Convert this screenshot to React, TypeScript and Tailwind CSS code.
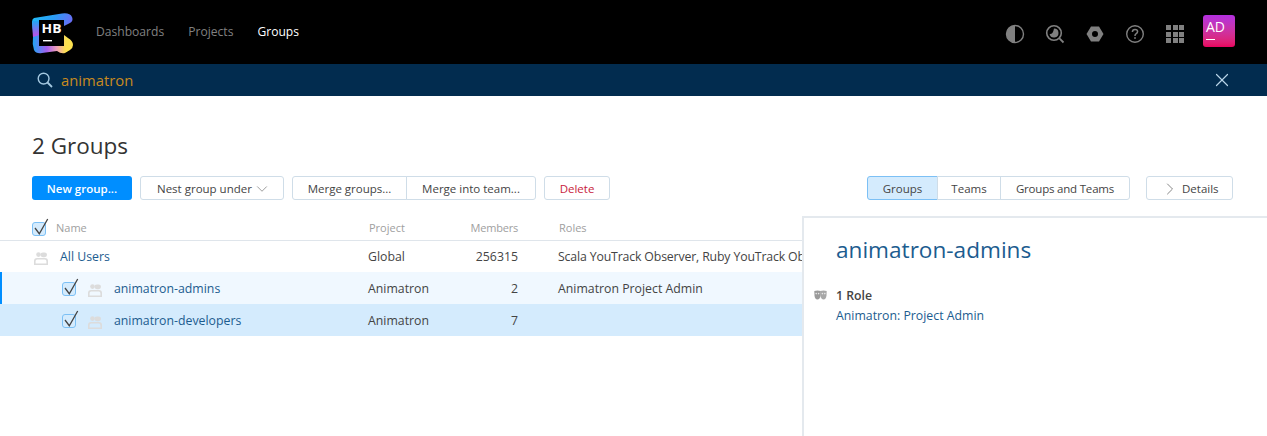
import { ChevronDown, ChevronRight, X } from "lucide-react";

const font = "font-['Open_Sans','Noto_Sans',sans-serif]";

const Logo = () => (
  <svg width="42" height="41" viewBox="0 0 42 41" className="shrink-0 mt-[3px]">
    <defs>
      <linearGradient id="logoTop" x1="0" y1="0" x2="1" y2="0.3">
        <stop offset="0" stopColor="#1fc0f7" />
        <stop offset="0.55" stopColor="#2b9bf5" />
        <stop offset="1" stopColor="#6a6cf5" />
      </linearGradient>
      <linearGradient id="logoLeft" x1="0" y1="0" x2="0" y2="1">
        <stop offset="0" stopColor="#1fa8f5" />
        <stop offset="1" stopColor="#c94be8" />
      </linearGradient>
      <linearGradient id="logoBottom" x1="0" y1="0.5" x2="1" y2="0.5">
        <stop offset="0" stopColor="#1fa5f5" />
        <stop offset="0.35" stopColor="#a45fee" />
        <stop offset="0.6" stopColor="#f0a0b8" />
        <stop offset="0.82" stopColor="#fbe04f" />
        <stop offset="1" stopColor="#fbe04f" />
      </linearGradient>
    </defs>
    <path d="M2 5 L30 0.5 Q38 -0.5 40 4 Q42 9 36 11 L32 13 L8 20 L2 23 Q0 14 0 9 Q0 6 2 5 Z" fill="url(#logoTop)" />
    <path d="M0.5 8 L8 8 L8 24 L1 24 Q0 14 0.5 8 Z" fill="url(#logoLeft)" />
    <path d="M1 24 L7 22 L7 33 L32 33 L32 22 L36 25 Q41 28 41 32 Q41 35 38 37 L33 40 Q29 41 25 38 L10 40 Q4 41 2 37 Q0 31 1 24 Z" fill="url(#logoBottom)" />
    <rect x="7" y="7" width="25" height="26" fill="#000" />
    <text x="9.5" y="20" fill="#fff" fontSize="13" fontWeight="700" fontFamily="'Open Sans', sans-serif" textLength="20" lengthAdjust="spacingAndGlyphs">
      HB
    </text>
    <rect x="11" y="27" width="9" height="1.4" fill="#fff" />
  </svg>
);

const ContrastIcon = () => (
  <svg width="20" height="20" viewBox="0 0 20 20">
    <circle cx="10" cy="10" r="8.5" fill="none" stroke="#808080" strokeWidth="1.4" />
    <path d="M10 1.5 A8.5 8.5 0 0 0 10 18.5 Z" fill="#808080" />
  </svg>
);

const ScanIcon = () => (
  <svg width="20" height="20" viewBox="0 0 20 20">
    <circle cx="9" cy="9" r="7.3" fill="none" stroke="#808080" strokeWidth="1.6" />
    <path d="M9 4.5 A4.5 4.5 0 1 1 4.6 10 Q8 10.5 9 4.5 Z" fill="#808080" />
    <path d="M14.2 14.2 L18.5 18.5" stroke="#808080" strokeWidth="1.8" />
  </svg>
);

const NutIcon = () => (
  <svg width="20" height="20" viewBox="0 0 20 20">
    <path fillRule="evenodd" d="M6 2.5 H14 L18.5 10 L14 17.5 H6 L1.5 10 Z M10 7 A3 3 0 1 0 10 13 A3 3 0 1 0 10 7 Z" fill="#808080" />
  </svg>
);

const HelpIcon = () => (
  <svg width="20" height="20" viewBox="0 0 20 20">
    <circle cx="10" cy="10" r="8.3" fill="none" stroke="#808080" strokeWidth="1.4" />
    <path d="M7.4 8 Q7.4 5.4 10 5.4 Q12.6 5.4 12.6 7.6 Q12.6 9 11 9.8 Q10 10.4 10 12" fill="none" stroke="#808080" strokeWidth="1.5" />
    <rect x="9.2" y="13.2" width="1.6" height="1.6" fill="#808080" />
  </svg>
);

const AppsIcon = () => (
  <div className="grid grid-cols-3 gap-[1.5px] ml-[1px]">
    {Array.from({ length: 9 }).map((_, i) => (
      <span key={i} className="w-[5px] h-[5px] bg-[#808080]" />
    ))}
  </div>
);

const UserIcon = () => (
  <svg width="14" height="13" viewBox="0 0 14 13" className="shrink-0">
    <circle cx="4.5" cy="2.6" r="2.3" fill="#dcdcdc" />
    <rect x="6.5" y="0.4" width="6.5" height="4.8" rx="2.4" fill="#dcdcdc" />
    <path fillRule="evenodd" d="M0 13 V9 Q0 6 3 6 H11 Q14 6 14 9 V13 Z M1.6 11.6 H12.4 V9.2 Q12.4 7.6 10.8 7.6 H3.2 Q1.6 7.6 1.6 9.2 Z" fill="#dcdcdc" />
  </svg>
);

const MasksIcon = () => (
  <svg width="13" height="10" viewBox="0 0 13 10" className="shrink-0">
    <path d="M0.3 1 Q3.5 -0.2 6.8 1 L6.6 5.5 Q6 9.5 3.4 9.5 Q0.9 9.5 0.5 5.5 Z" fill="#9a9a9a" />
    <path d="M6.2 1 Q9.5 -0.2 12.7 1 L12.5 5.5 Q12 9.5 9.6 9.5 Q7 9.5 6.4 5.5 Z" fill="#a8a8a8" />
    <circle cx="2.2" cy="3.6" r="0.8" fill="#e8e8e8" />
    <circle cx="4.6" cy="3.6" r="0.8" fill="#e8e8e8" />
    <circle cx="8.4" cy="3.6" r="0.8" fill="#e8e8e8" />
    <circle cx="10.8" cy="3.6" r="0.8" fill="#e8e8e8" />
  </svg>
);

const Check = () => (
  <span className="relative block w-[14px] h-[14px] rounded-[3px] border border-[#7cc0f5] bg-[#d4ebfd] shrink-0">
    <svg width="18" height="20" viewBox="0 0 18 20" className="absolute -top-[6px] -left-[1px]">
      <path d="M3 11 L7.3 16.7 L15.7 2" fill="none" stroke="#444" strokeWidth="1.3" />
    </svg>
  </span>
);

const btn = "h-[24px] flex items-center justify-center border border-[#cfdde8] text-[11.5px] text-[#444] pt-px";

const rows = [
  { name: "All Users", project: "Global", members: "256315", roles: "Scala YouTrack Observer, Ruby YouTrack Observer", bg: "bg-white h-[31px]", nested: false, accent: false, rolesClass: "tracking-[-0.15px]" },
  { name: "animatron-admins", project: "Animatron", members: "2", roles: "Animatron Project Admin", bg: "bg-[#f0f8ff] h-[32px]", nested: true, accent: true, rolesClass: "" },
  { name: "animatron-developers", project: "Animatron", members: "7", roles: "", bg: "bg-[#d4ebfd] h-[32px]", nested: true, accent: false, rolesClass: "" },
];

export default function App() {
  return (
    <div className={`w-[1267px] h-[436px] overflow-hidden bg-white relative ${font}`}>
      <header className="h-[64px] bg-black flex items-center pl-[32px] pr-[32px]">
        <Logo />
        <nav className="flex items-center gap-[24px] ml-[22px] text-[12.1px]">
          <span className="text-[#808080]">Dashboards</span>
          <span className="text-[#808080]">Projects</span>
          <span className="text-white">Groups</span>
        </nav>
        <div className="ml-auto flex items-center">
          <div className="flex items-center gap-[20px] mr-[19px] mt-[4px]">
            <ContrastIcon />
            <ScanIcon />
            <NutIcon />
            <HelpIcon />
            <AppsIcon />
          </div>
          <div className="relative w-[32px] h-[32px] mb-[2px] rounded-[3px] bg-gradient-to-b from-[#b32fe0] to-[#e8005f] text-white text-[14px] leading-none pl-[3px] pt-[5px]">
            AD
            <span className="absolute left-[3px] top-[24px] w-[9px] h-[1px] bg-white" />
          </div>
        </div>
      </header>

      <div className="h-[32px] bg-[#022c4f] flex items-center pl-[37px] pr-[34px]">
        <svg width="16" height="16" viewBox="0 0 16 16" className="shrink-0">
          <circle cx="6.6" cy="6.6" r="5.4" fill="none" stroke="#a4c8e0" strokeWidth="1.4" />
          <path d="M10.5 10.5 L15 15" stroke="#a4c8e0" strokeWidth="1.8" />
        </svg>
        <span className="ml-[8px] text-[14.8px] text-[#c98a1e]">animatron</span>
        <X size={22} strokeWidth={1.3} className="ml-auto text-[#b8d4e8]" />
      </div>

      <main className="pt-[36px]">
        <h1 className="pl-[32px] text-[22.5px] leading-[28px] text-[#333] font-normal">2 Groups</h1>

        <div className="flex items-center pl-[32px] pr-[34px] mt-[16px]">
          <button className="w-[100px] h-[24px] pt-px rounded-[3px] bg-[#008eff] text-white text-[11.5px] font-semibold">New group...</button>
          <button className={`${btn} w-[144px] ml-[8px] rounded-[3px] !justify-start pl-[16px]`}>
            Nest group under
            <ChevronDown size={18} strokeWidth={1.1} className="ml-[1px] text-[#888]" />
          </button>
          <div className="flex ml-[8px]">
            <button className={`${btn} w-[115px] rounded-l-[3px]`}>Merge groups...</button>
            <button className={`${btn} w-[130px] -ml-px rounded-r-[3px]`}>Merge into team...</button>
          </div>
          <button className={`${btn} w-[66px] ml-[8px] rounded-[3px] !text-[#c8213c]`}>Delete</button>

          <div className="flex ml-auto">
            <button className={`${btn} w-[71px] rounded-l-[3px] !bg-[#d4ebfd] !border-[#7cc0f5]`}>Groups</button>
            <button className={`${btn} w-[64px] -ml-px`}>Teams</button>
            <button className={`${btn} w-[130px] -ml-px rounded-r-[3px] tracking-[-0.2px]`}>Groups and Teams</button>
          </div>
          <button className={`${btn} w-[87px] ml-[16px] rounded-[3px] !justify-start pl-[13px]`}>
            <ChevronRight size={20} strokeWidth={1.2} className="text-[#888]" />
            <span className="ml-[2px]">Details</span>
          </button>
        </div>

        <div className="mt-[16px]">
          <div className="h-[25px] pt-px flex items-center border-b border-[#dfe5eb] text-[11px] text-[#a0a0a0] pl-[32px]">
            <Check />
            <span className="ml-[10px] w-[313px]">Name</span>
            <span className="w-[64px]">Project</span>
            <span className="w-[85px] text-right tracking-[-0.2px]">Members</span>
            <span className="ml-[41px]">Roles</span>
          </div>
          {rows.map((r) => (
            <div key={r.name} className={`flex items-center pt-[2px] text-[12.3px] text-[#444] whitespace-nowrap ${r.bg} ${r.accent ? "border-l-2 border-[#008eff]" : ""}`}>
              {r.nested ? (
                <div className={`flex items-center ${r.accent ? "w-[366px] pl-[60px]" : "w-[368px] pl-[62px]"}`}>
                  <Check />
                  <span className="ml-[12px] mt-[2px]"><UserIcon /></span>
                  <span className="ml-[12px] text-[#1c5c8f]">{r.name}</span>
                </div>
              ) : (
                <div className="flex items-center w-[368px] pl-[34px]">
                  <span className="mt-[2px]"><UserIcon /></span>
                  <span className="ml-[12px] text-[#1c5c8f]">{r.name}</span>
                </div>
              )}
              <span className="w-[64px]">{r.project}</span>
              <span className="w-[86px] text-right">{r.members}</span>
              <span className={`ml-[40px] ${r.rolesClass}`}>{r.roles}</span>
            </div>
          ))}
        </div>
      </main>

      <aside className="absolute left-[802px] top-[216px] w-[465px] h-[220px] bg-white border-l-2 border-t-2 border-[#e4e9ee] pl-[32px] pt-[17px]">
        <h2 className="text-[22.6px] leading-[30px] text-[#1c5c8f] font-normal">animatron-admins</h2>
        <div className="relative mt-[21px] text-[12.3px]">
          <span className="absolute -left-[22px] top-[4px]"><MasksIcon /></span>
          <div className="font-semibold text-[#444] leading-[20px]">1 Role</div>
          <div className="text-[#1c5c8f] leading-[20px]">Animatron: Project Admin</div>
        </div>
      </aside>
    </div>
  );
}
